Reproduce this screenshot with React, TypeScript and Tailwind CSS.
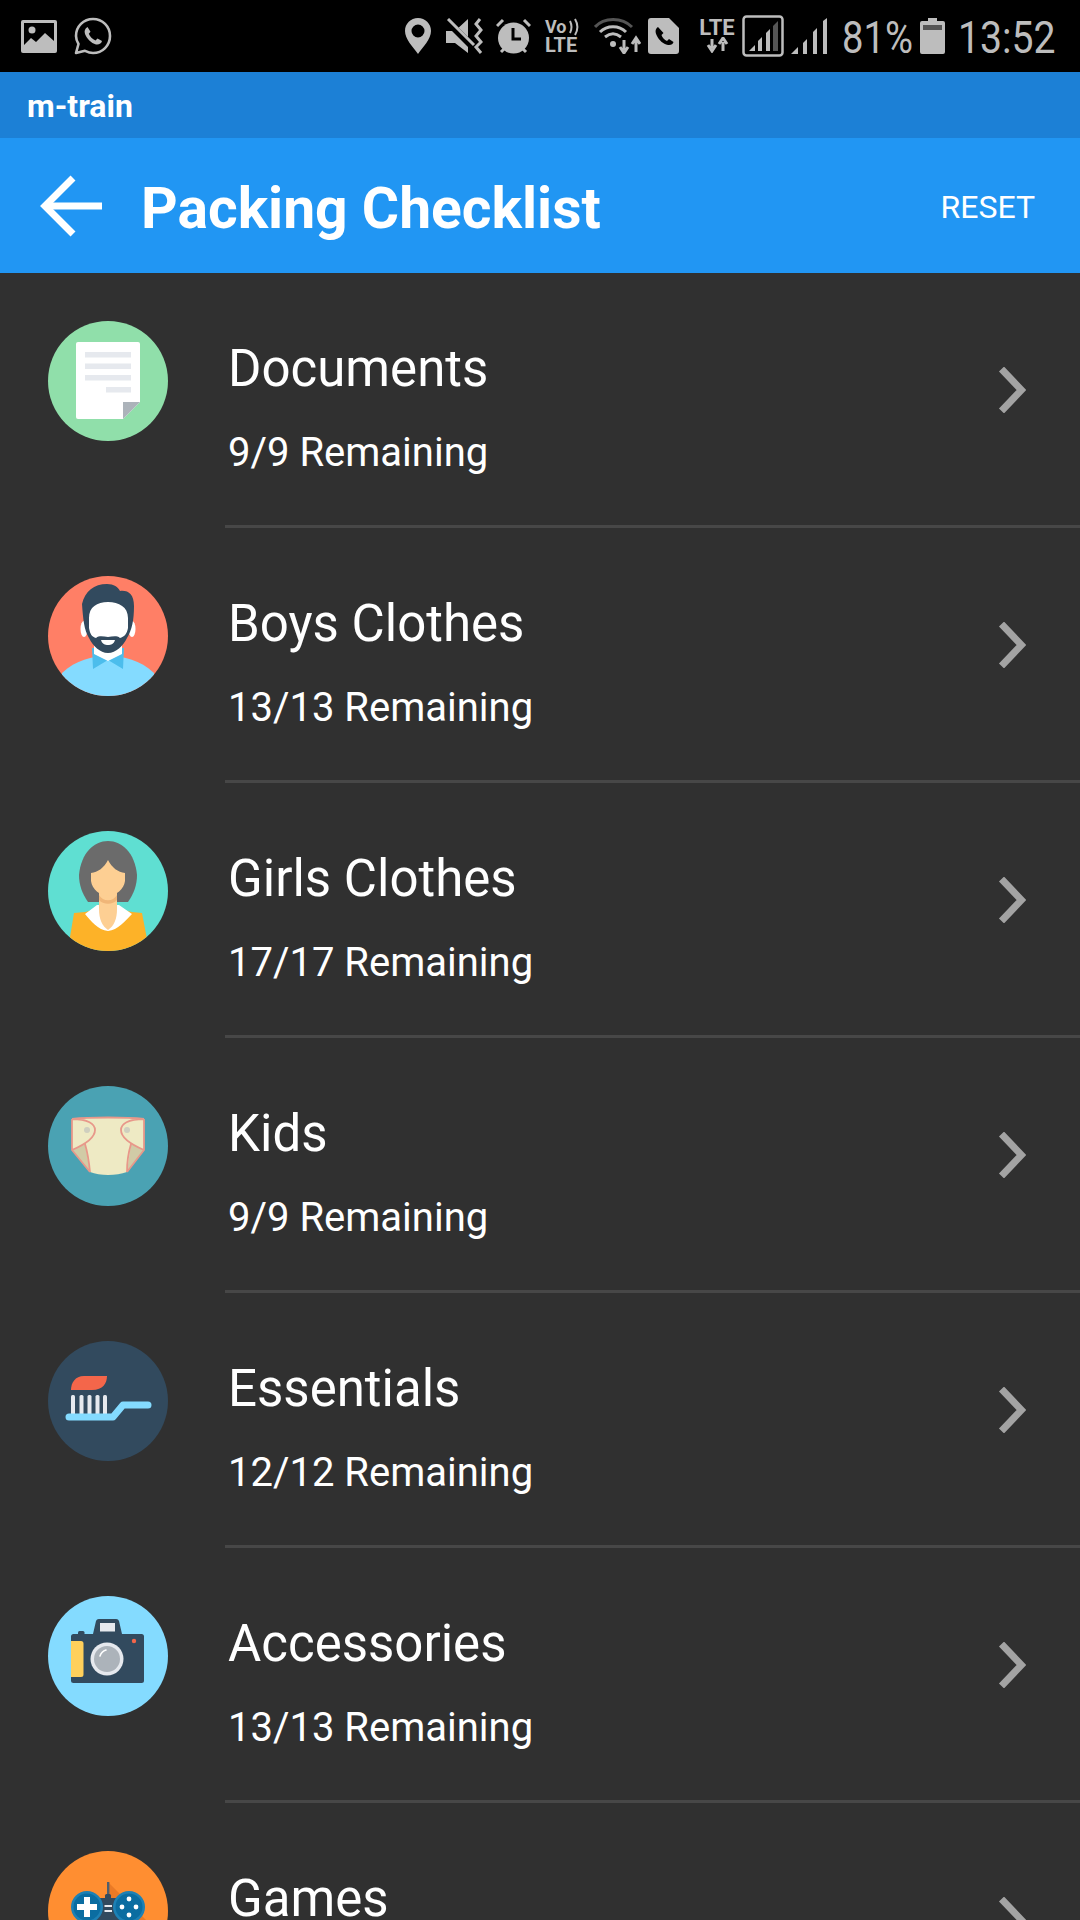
import React from 'react';

const DocumentsIcon = () => (
    <svg viewBox="0 0 120 120" className="w-full h-full">
        <circle cx="60" cy="60" r="60" fill="#90dfaa" />
        <path d="M30 21 H90 a2 2 0 0 1 2 2 V81 L75 98 H30 a2 2 0 0 1 -2 -2 V23 a2 2 0 0 1 2 -2 Z" fill="#fff" />
        <path d="M75 81 H92 L75 98 Z" fill="#acb3ba" />
        <rect x="37" y="31" width="46" height="5.5" fill="#e6e9ee" />
        <rect x="37" y="42.5" width="46" height="5.5" fill="#e6e9ee" />
        <rect x="37" y="54" width="46" height="5.5" fill="#e6e9ee" />
        <rect x="58" y="66" width="25" height="5.5" fill="#e6e9ee" />
    </svg>
);

const BoyIcon = () => (
    <svg viewBox="0 0 120 120" className="w-full h-full">
        <defs>
            <clipPath id="boy-clip"><circle cx="60" cy="60" r="60" /></clipPath>
        </defs>
        <g clipPath="url(#boy-clip)">
            <rect width="120" height="120" fill="#ff7f66" />
            <path d="M14 97 C28 84 44 80 60 80 C76 80 92 84 106 97 L106 125 H14 Z" fill="#84dbff" />
            <path d="M44 72 L45 93 L60 84 L75 93 L76 72 Z" fill="#4cbdec" />
            <path d="M46 68 H74 V78 L60 85 L46 78 Z" fill="#fff" />
            <ellipse cx="36" cy="53" rx="3.5" ry="8" fill="#fff" />
            <ellipse cx="84" cy="53" rx="3.5" ry="8" fill="#fff" />
            <path d="M34 28 C37 15 46 8 59 8 C66 8 70 11 72 15 C80 14 86 18 86 30 C86 44 84 54 79 62 C75 70 68 77 60 77 C52 77 45 70 41 62 C36 54 35 42 34 28 Z" fill="#324a5e" />
            <path d="M41 42 C41 31 49 26 60 26 C71 26 80 31 80 42 V52 C79 58 76 61 72 62 C68 59 64 61 60 61 C56 61 52 59 48 62 C44 61 42 58 41 52 Z" fill="#fff" />
            <path d="M53 64 H67 C66 68 63 69 60 69 C57 69 54 68 53 64 Z" fill="#fff" />
        </g>
    </svg>
);

const GirlIcon = () => (
    <svg viewBox="0 0 120 120" className="w-full h-full">
        <defs>
            <clipPath id="girl-clip"><circle cx="60" cy="60" r="60" /></clipPath>
        </defs>
        <g clipPath="url(#girl-clip)">
            <rect width="120" height="120" fill="#5fdfd2" />
            <path d="M40 71 C34 62 31 54 31 44 C33 22 46 10 60 10 C74 10 87 22 89 44 C89 54 86 62 80 71 Z" fill="#6b6b6b" />
            <path d="M26 82 L37 81 L49 78 H71 L84 81 L94 82 L99 108 L100 125 H20 L22 106 Z" fill="#fdb228" />
            <path d="M37 83 L49 74 H71 L84 83 C77 90 70 99 60 100 C50 99 43 90 37 83 Z" fill="#fff" />
            <path d="M51 58 H69 V78 C69 88 66 95 60 99 C54 95 51 88 51 78 Z" fill="#fdcf93" />
            <path d="M51 64 C55 71 65 71 69 64 V69 C65 74 55 74 51 69 Z" fill="#f0b678" />
            <path d="M43 42 C50 41 56 37 60 29 C64 37 70 41 77 42 V50 C76 58 68 65 60 65 C52 65 44 58 43 50 Z" fill="#fdcf93" />
        </g>
    </svg>
);

const KidsIcon = () => (
    <svg viewBox="0 0 120 120" className="w-full h-full">
        <circle cx="60" cy="60" r="60" fill="#4aa2b3" />
        <path d="M24 33 C42 31 78 31 96 33 V64 L79 86 C68 90 52 90 42 86 L24 64 Z" fill="#eeeac4" />
        <path d="M24 64 L37 58 L42 86 Z" fill="#d1cba6" />
        <path d="M96 64 L83 58 L79 86 Z" fill="#d1cba6" />
        <path d="M24 33 C42 31 78 31 96 33 M24 33 V64 L42 86 M96 33 V64 L79 86 M24 64 C38 58 47 52 47 44 C47 38 40 33 24 33 M96 64 C82 58 73 52 73 44 C73 38 80 33 96 33 M37 58 C40 68 41 76 42 86 M83 58 C80 68 79 76 79 86" fill="none" stroke="#e8988a" strokeWidth="1.8" />
        <circle cx="39" cy="44" r="3" fill="#cfcfbf" />
        <circle cx="79" cy="44" r="3" fill="#cfcfbf" />
    </svg>
);

const EssentialsIcon = () => (
    <svg viewBox="0 0 120 120" className="w-full h-full">
        <circle cx="60" cy="60" r="60" fill="#324a5e" />
        <path d="M23 49 C23 42 27 35 36 35 H59 C59 42 55 49 44 49 Z" fill="#f4664a" />
        {[23, 31.5, 39.5, 47.5, 55].map((x) => (
            <rect key={x} x={x} y="54" width="4" height="20" rx="1.5" fill="#e6e9ee" />
        ))}
        <path d="M21 76 H65 L75 64 H100" fill="none" stroke="#84dbff" strokeWidth="7" strokeLinecap="round" strokeLinejoin="round" />
    </svg>
);

const AccessoriesIcon = () => (
    <svg viewBox="0 0 120 120" className="w-full h-full">
        <circle cx="60" cy="60" r="60" fill="#84dbff" />
        <rect x="30" y="35" width="6.5" height="6" rx="1.5" fill="#324a5e" />
        <path d="M45 38 L48 25 a3 3 0 0 1 3 -2 H68 a3 3 0 0 1 3 2 L74 38 Z" fill="#324a5e" />
        <rect x="23" y="38" width="73" height="49" rx="2.5" fill="#324a5e" />
        <rect x="52" y="27" width="15" height="8.5" fill="#e6e9ee" />
        <path d="M23 45 H33 a2.5 2.5 0 0 1 2.5 2.5 V78.5 a2.5 2.5 0 0 1 -2.5 2.5 H23 Z" fill="#ffd05b" />
        <circle cx="59" cy="63" r="16.5" fill="#e6e9ee" />
        <circle cx="59" cy="63" r="13" fill="#acb3ba" />
        <path d="M52 60 C53 57 55 55 58 54" fill="none" stroke="#fff" strokeWidth="1.6" strokeLinecap="round" />
        <circle cx="86" cy="45" r="2.2" fill="#f4664a" />
    </svg>
);

const GamesIcon = () => (
    <svg viewBox="0 0 120 120" className="w-full h-full">
        <defs>
            <clipPath id="games-clip"><circle cx="60" cy="60" r="60" /></clipPath>
        </defs>
        <g clipPath="url(#games-clip)">
            <rect width="120" height="120" fill="#ff8e31" />
            <path d="M60 31 L125 96 V125 H60 Z" fill="#ea7a26" />
            <rect x="59" y="31" width="2.4" height="14" fill="#4e5f6e" />
            <rect x="57" y="43" width="6" height="6" rx="1.5" fill="#324a5e" />
            <rect x="46" y="47" width="30" height="24" fill="#324a5e" />
            <rect x="56.5" y="54" width="7.5" height="2" fill="#e6e9ee" />
            <rect x="56.5" y="59" width="7.5" height="2" fill="#e6e9ee" />
            <circle cx="39" cy="56" r="16" fill="#1d81b5" />
            <circle cx="39" cy="56" r="13.5" fill="#0b6da1" />
            <path d="M36 46 H42 V53 H49 V59 H42 V66 H36 V59 H29 V53 H36 Z" fill="#fff" />
            <circle cx="81" cy="56" r="16" fill="#1d81b5" />
            <circle cx="81" cy="56" r="13.5" fill="#0b6da1" />
            <circle cx="81" cy="48" r="2.4" fill="#fff" />
            <circle cx="81" cy="64" r="2.4" fill="#fff" />
            <circle cx="74" cy="56" r="2.4" fill="#fff" />
            <circle cx="88" cy="56" r="2.4" fill="#fff" />
        </g>
    </svg>
);

const items = [
    { title: 'Documents', sub: '9/9 Remaining', icon: <DocumentsIcon /> },
    { title: 'Boys Clothes', sub: '13/13 Remaining', icon: <BoyIcon /> },
    { title: 'Girls Clothes', sub: '17/17 Remaining', icon: <GirlIcon /> },
    { title: 'Kids', sub: '9/9 Remaining', icon: <KidsIcon /> },
    { title: 'Essentials', sub: '12/12 Remaining', icon: <EssentialsIcon /> },
    { title: 'Accessories', sub: '13/13 Remaining', icon: <AccessoriesIcon /> },
    { title: 'Games', sub: '', icon: <GamesIcon /> },
];

const StatusBar: React.FC = () => (
    <div className="h-[72px] bg-black flex items-center justify-between pl-[21px] pr-[25px] text-[#bdbdbd]">
        <div className="flex items-center">
            <svg width="36" height="33" viewBox="0 0 36 33">
                <rect width="36" height="33" rx="2" fill="#bdbdbd" />
                <rect x="3" y="3" width="30" height="27" fill="#000" />
                <circle cx="11" cy="10" r="3.5" fill="#bdbdbd" />
                <path d="M3 25 L10 18 L15 22 L24 13 L33 21 V30 H3 Z" fill="#bdbdbd" />
            </svg>
            <svg width="38" height="38" viewBox="0 0 38 38" className="ml-[17px]">
                <path d="M2 36 L4.5 27 C3 24.5 2 22 2 19 C2 9.5 9.5 2 19 2 C28.5 2 36 9.5 36 19 C36 28.5 28.5 36 19 36 C16 36 13.5 35 11 33.8 Z" fill="none" stroke="#bdbdbd" strokeWidth="2.6" strokeLinejoin="round" />
                <path d="M13.5 10 C11 11.5 10 14 11 17 C13 22 17 26 22 27.5 C25 28 27.5 26.5 28 24 L23.5 21.5 L21.5 23.5 C18.5 22.5 15.8 19.5 14.8 16.8 L16.5 14.8 Z" fill="#bdbdbd" />
            </svg>
        </div>
        <div className="flex items-center">
            <svg width="26" height="36" viewBox="0 0 26 36">
                <path fillRule="evenodd" d="M13 0 C5.8 0 0 5.6 0 13 C0 21 8 29 13 36 C18 29 26 21 26 13 C26 5.6 20.2 0 13 0 Z M13 6.5 A6.5 6.5 0 1 1 13 19.5 A6.5 6.5 0 1 1 13 6.5 Z" fill="#bdbdbd" />
            </svg>
            <svg width="37" height="36" viewBox="0 0 37 36" className="ml-[15px]">
                <path d="M0 13 H9 L22 1 V35 L9 25 H0 Z" fill="#bdbdbd" />
                <path d="M1 3 L28 30" stroke="#000" strokeWidth="7" />
                <path d="M2 1 L28 27" stroke="#bdbdbd" strokeWidth="3" />
                <path d="M34 1 L30 6 L35 12 L30 18 L35 24 L30 29 L35 35" fill="none" stroke="#bdbdbd" strokeWidth="3" />
            </svg>
            <svg width="35" height="36" viewBox="0 0 35 36" className="ml-[13px]">
                <circle cx="17.5" cy="20" r="15.5" fill="#bdbdbd" />
                <path d="M17 10 V21 H25" fill="none" stroke="#000" strokeWidth="3" />
                <path d="M1 8 L7 2 M34 8 L28 2 M5 34 L8 31 M30 34 L27 31" stroke="#bdbdbd" strokeWidth="3" />
            </svg>
            <div className="relative ml-[14px] w-[34px] h-[36px] font-bold">
                <div className="text-[18px] leading-[18px]">Vo</div>
                <div className="text-[20px] leading-[18px]">LTE</div>
                <svg width="10" height="18" viewBox="0 0 10 18" className="absolute top-0 right-0">
                    <path d="M1 3 C3 7 3 11 1 15 M6 1 C9 6 9 12 6 17" fill="none" stroke="#bdbdbd" strokeWidth="2" />
                </svg>
            </div>
            <svg width="47" height="36" viewBox="0 0 47 36" className="ml-[15px]">
                <path d="M1 9 C10 -1 28 -1 38 9" fill="none" stroke="#555" strokeWidth="3" />
                <path d="M6 14 C13 7 25 7 32 14" fill="none" stroke="#bdbdbd" strokeWidth="3" />
                <path d="M11 19 C16 15 22 15 27 19" fill="none" stroke="#bdbdbd" strokeWidth="3" />
                <circle cx="19" cy="26" r="3" fill="#bdbdbd" />
                <path d="M30 22 V32 M26 29 L30 35 L34 29" fill="none" stroke="#bdbdbd" strokeWidth="3" />
                <path d="M42 34 V22 M38 26 L42 20 L46 26" fill="none" stroke="#bdbdbd" strokeWidth="3" />
            </svg>
            <svg width="31" height="36" viewBox="0 0 31 36" className="ml-[7px]">
                <path d="M3 0 H21 L31 10 V33 a3 3 0 0 1 -3 3 H3 a3 3 0 0 1 -3 -3 V3 a3 3 0 0 1 3 -3 Z" fill="#bdbdbd" />
                <path d="M10 9 C7 11 7 14 9 18 C11 22 15 26 20 27 C23 27.5 25 26 25.5 24 L21 21 L19 23 C16.5 22 14 19 13.5 17 L15.5 15 Z" fill="#000" />
            </svg>
            <div className="ml-[19px] w-[38px] h-[34px] flex flex-col items-center font-bold">
                <div className="text-[22px] leading-[18px]">LTE</div>
                <svg width="24" height="16" viewBox="0 0 24 16">
                    <path d="M7 2 V11 M3 8 L7 14 L11 8" fill="none" stroke="#bdbdbd" strokeWidth="3" />
                    <path d="M18 14 V5 M14 7 L18 1 L22 7" fill="none" stroke="#bdbdbd" strokeWidth="3" />
                </svg>
            </div>
            <svg width="42" height="42" viewBox="0 0 42 42" className="ml-[6px]">
                <rect x="1.5" y="1.5" width="39" height="39" rx="3" fill="none" stroke="#bdbdbd" strokeWidth="2.5" />
                <path d="M7 36 L13 30 V36 Z" fill="#bdbdbd" />
                <path d="M16 36 V26 L20 22 V36 Z" fill="#bdbdbd" />
                <path d="M24 36 V18 L28 14 V36 Z" fill="#bdbdbd" />
                <path d="M31 36 V11 L36 6 V36 Z" fill="#555" />
            </svg>
            <svg width="36" height="36" viewBox="0 0 36 36" className="ml-[7px]">
                <path d="M0 36 L7 29 V36 Z" fill="#bdbdbd" />
                <path d="M12 36 V25 L16 21 V36 Z" fill="#bdbdbd" />
                <path d="M22 36 V14 L26 10 V36 Z" fill="#bdbdbd" />
                <path d="M32 36 V3 L36 0 V36 Z" fill="#bdbdbd" />
            </svg>
            <span className="ml-[15px] pt-[3px] w-[70px] text-[45px] leading-none whitespace-nowrap origin-left scale-x-[0.85]">81%</span>
            <svg width="25" height="36" viewBox="0 0 25 36" className="ml-[8px]">
                <path d="M8 0 H17 V3 H23 a2 2 0 0 1 2 2 V34 a2 2 0 0 1 -2 2 H2 a2 2 0 0 1 -2 -2 V5 a2 2 0 0 1 2 -2 H8 Z" fill="#bdbdbd" />
                <rect x="3" y="7" width="19" height="5" fill="#555" />
            </svg>
            <span className="ml-[13px] pt-[3px] w-[97px] text-[45px] leading-none whitespace-nowrap origin-left scale-x-[0.87]">13:52</span>
        </div>
    </div>
);

const App: React.FC = () => {
    return (
        <div className="w-[1080px] h-[1920px] overflow-hidden bg-[#303030] font-[Roboto,sans-serif]">
            <StatusBar />
            <div className="h-[66px] bg-[#1c80d6] flex items-center pl-[27px] pt-[2px]">
                <span className="text-[32px] font-bold text-white">m-train</span>
            </div>
            <div className="h-[135px] bg-[#2196f3] flex items-center pl-[40px] pr-[45px]">
                <svg width="62" height="62" viewBox="0 0 62 62" fill="none" stroke="#fff" strokeWidth="7" className="shrink-0">
                    <path d="M62 31 H5" />
                    <path d="M33 3 L5 31 L33 59" />
                </svg>
                <h1 className="ml-[39px] pt-[6px] text-[57px] font-bold text-white flex-1">Packing Checklist</h1>
                <span className="pt-[2px] text-[32px] text-white">RESET</span>
            </div>
            <div>
                {items.map((item) => (
                    <div key={item.title} className="h-[255px] flex">
                        <div className="w-[225px] shrink-0 pl-12 pt-12">
                            <div className="w-[120px] h-[120px]">{item.icon}</div>
                        </div>
                        <div className="flex-1 flex border-b-[3px] border-[#474747] pl-[3px] pr-[54px]">
                            <div className="flex-1 pt-[66px]">
                                <div className="text-[51px] leading-[60px] text-white">{item.title}</div>
                                {item.sub && <div className="mt-[32px] text-[40px] leading-[44px] text-white">{item.sub}</div>}
                            </div>
                            <svg width="28" height="46" viewBox="0 0 28 46" fill="none" stroke="#a3a3a3" strokeWidth="7" className="mt-[94px]">
                                <path d="M3.5 2 L23.5 23 L3.5 44" />
                            </svg>
                        </div>
                    </div>
                ))}
            </div>
        </div>
    );
};

export default App;
